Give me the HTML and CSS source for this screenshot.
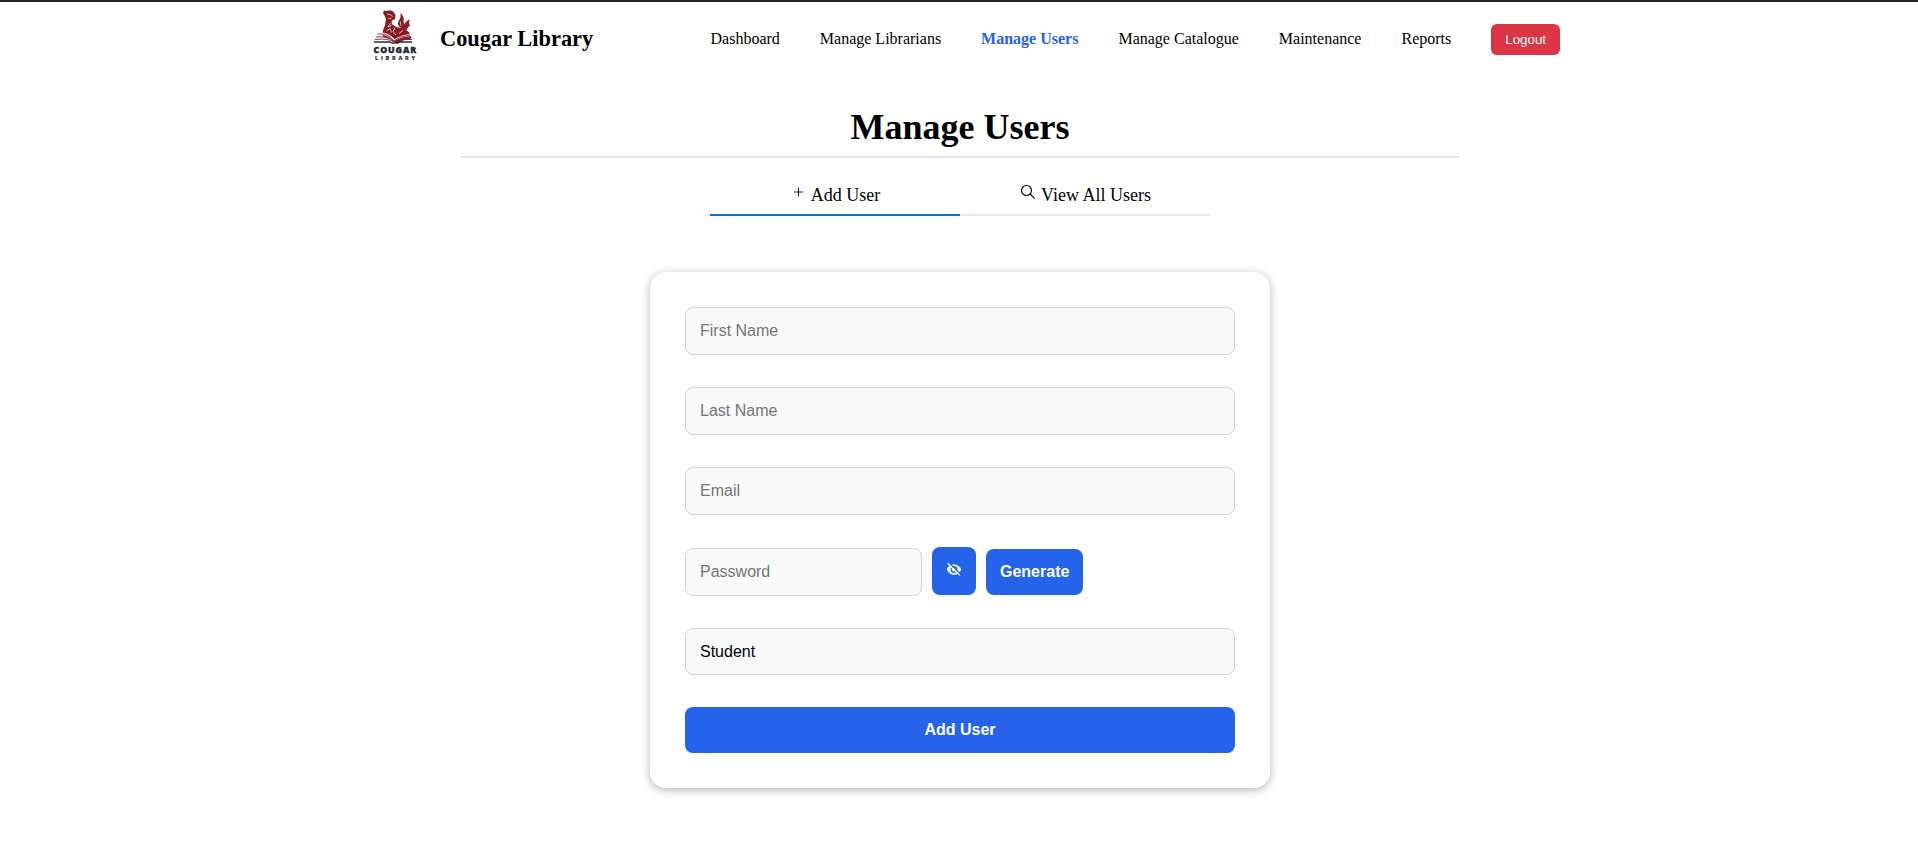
FILE: index.html
```html
<!DOCTYPE html>
<html lang="en">
<head>
<meta charset="utf-8">
<title>Cougar Library</title>
<link rel="stylesheet" href="styles.css">
</head>
<body>
<header class="navbar">
  <div class="brand">
    <svg class="logo" viewBox="0 0 60 60" width="60" height="60">
      <g fill="#8a1c24">
        <path d="M14 9l1-2.500 2.500.5 4-.8 3 1.500 2 3.500-.5 4-3.500 1.500.5 3.500 5 3 7 1 5 4 2.300 5-.8 2-7 1-6.500 4-6-5-8.500-3 .5-6 2-5 1-6-1.500-4z"/>
        <path d="M31.500 23.500c-4-3-2.500-6-1-8 1.200-2 1.500-4 .8-6.500 3 2 4 6 3.200 8.500l.8 3c1.500-3 2.700-4 5.700-5-1.500 2.500-1 4 0 6-1 1-2.500 1.500-3 4.500z"/>
      </g>
      <path d="M18 10l3 .5 2.500 2M19 15l3.500-1M21.500 19l-2.500 4 3.500-1.500M17.500 27l3.500-2.500 1.500 4M26 23.500l-2 4 3 3.500M34 26.500l-4 3M31 17l1 5" fill="none" stroke="#fff" stroke-width=".65"/>
      <path d="M8 29.500q11-.5 17.500 7Q32 31.500 43 31" fill="none" stroke="#fff" stroke-width="2.200"/>
      <path d="M8.500 30q11-1 16.500 7 6-5 16-6M7 33q12-1 18 4.500 7-4 17.500-4.500M6 35.500q13-1.500 19 2.500 6-3 18-2.500" fill="none" stroke="#8a1c24" stroke-width=".9"/>
      <path d="M5 38h16q3.500 2.500 7 0h15" fill="none" stroke="#1c2c3c" stroke-width="1.300"/>
      <text class="logo-name" x="4.600" y="49.300" textLength="42.500">COUGAR</text>
      <text class="logo-sub" x="6" y="55.500" textLength="40">LIBRARY</text>
    </svg>
    <span class="brand-name">Cougar Library</span>
  </div>
  <nav class="links">
    <a>Dashboard</a>
    <a>Manage Librarians</a>
    <a class="active">Manage Users</a>
    <a>Manage Catalogue</a>
    <a>Maintenance</a>
    <a>Reports</a>
    <button class="logout">Logout</button>
  </nav>
</header>
<main>
  <h1 class="title">Manage Users</h1>
  <div class="tabs">
    <div class="tab selected">
      <svg class="plus" width="16" height="16" viewBox="0 0 16 16"><path d="M8.500 3.500v9M4 8h9" fill="none" stroke="#222" stroke-width="1.100"/></svg>
      <span>Add User</span>
    </div>
    <div class="tab">
      <svg class="search" width="16" height="16" viewBox="0 0 16 16"><path d="M12.500 6.500a5 5 0 1 1-10 0a5 5 0 1 1 10 0M11.100 10l4.700 4.700" fill="none" stroke="#111" stroke-width="1.200"/></svg>
      <span>View All Users</span>
    </div>
  </div>
  <form class="card">
    <input class="field" type="text" placeholder="First Name">
    <input class="field" type="text" placeholder="Last Name">
    <input class="field" type="email" placeholder="Email">
    <div class="password-row">
      <input class="field password" type="password" placeholder="Password">
      <button type="button" class="primary eye" aria-label="Show password">
        <svg width="16" height="16" viewBox="0 0 16 16">
          <path d="M.8 7.500C2.200 4.300 4.800 2.200 8 2.200s5.800 2.100 7.200 5.300c-1.400 3.200-4 5.300-7.200 5.300S2.200 10.700.8 7.500z" fill="#fff"/>
          <circle cx="8" cy="7.500" r="3.500" fill="#2563eb"/>
          <circle cx="8" cy="7.500" r="2.100" fill="#fff"/>
          <path d="M2.800.5l12 12" stroke="#2563eb" stroke-width="1.400"/>
          <path d="M1.600 1.200l12.200 12.200" stroke="#fff" stroke-width="1.300"/>
        </svg>
      </button>
      <button type="button" class="primary generate">Generate</button>
    </div>
    <select class="field role"><option>Student</option></select>
    <button type="button" class="primary">Add User</button>
  </form>
</main>
</body>
</html>
```
FILE: styles.css
```css
* { box-sizing: border-box; }
body {
  margin: 0;
  min-height: 842px;
  border-top: 2px solid #242222;
  background: #fff;
  color: #000;
  font-family: "Liberation Serif", serif;
}
main { padding-left: 2px; }
.navbar {
  display: flex;
  justify-content: space-between;
  align-items: center;
  width: 1191px;
  height: 73px;
  margin-left: 369px;
}
.brand { display: flex; align-items: center; gap: 11px; }
.logo { margin-top: -9px; }
.logo-name { font: 800 8.800px "Open Sans", "Liberation Sans", sans-serif; fill: #1c2430; stroke: #1c2430; stroke-width: .3; }
.logo-sub { font: bold 5.600px "Open Sans", "Liberation Sans", sans-serif; fill: #1c2430; stroke: #1c2430; stroke-width: .2; }
.brand-name { font-size: 22.4px; font-weight: bold; line-height: 26px; }
.links { display: flex; align-items: center; gap: 40px; font-size: 16px; line-height: 18px; }
.active { color: #2563eb; font-weight: bold; }
.logout {
  margin-top: 2px;
  padding: 8px 14px;
  border: 0;
  border-radius: 6px;
  background: #dc3545;
  color: #fff;
  font: 13.333px/15px "Liberation Sans", sans-serif;
}
.title {
  width: 1000px;
  height: 58px;
  margin: 25px auto 0;
  padding-top: 7px;
  border-bottom: 2px solid #e5e7eb;
  font-size: 36px;
  line-height: 41px;
  text-align: center;
}
.tabs { display: flex; width: 500px; height: 58px; margin: 0 auto; }
.tab {
  display: flex;
  flex: 1;
  justify-content: center;
  align-items: flex-start;
  gap: 6px;
  padding-top: 26px;
  border-bottom: 2px solid #e5e7eb;
  font-size: 18px;
  line-height: 22px;
}
.selected { border-color: #0077c8; gap: 5px; }
.card {
  display: flex;
  flex-direction: column;
  gap: 32px;
  width: 620px;
  height: 516px;
  margin: 56px auto 0;
  padding: 35px;
  border-radius: 16px;
  background: #fff;
  box-shadow: 0 2px 10px rgba(0, 0, 0, .3);
}
.field, .primary { font-family: "Liberation Sans", sans-serif; font-size: 16px; }
.field {
  width: 100%;
  height: 48px;
  padding: 14px;
  border: 1px solid #cbd5e1;
  border-radius: 8px;
  background: #f9f9f9;
  outline: 0;
}
.field::placeholder { color: #757575; }
.password-row { display: flex; align-items: flex-end; gap: 10px; height: 49px; }
.password { width: 237px; }
.primary {
  height: 46px;
  padding: 0 14px;
  border: 0;
  border-radius: 8px;
  background: #2563eb;
  color: #fff;
  font-weight: bold;
}
.eye { width: 44px; height: 48px; margin-bottom: 1px; padding: 0 0 4px; }
.eye svg { vertical-align: middle; }
.generate { width: 97px; margin-bottom: 1px; }
.role { height: 47px; appearance: none; color: #000; }
```
